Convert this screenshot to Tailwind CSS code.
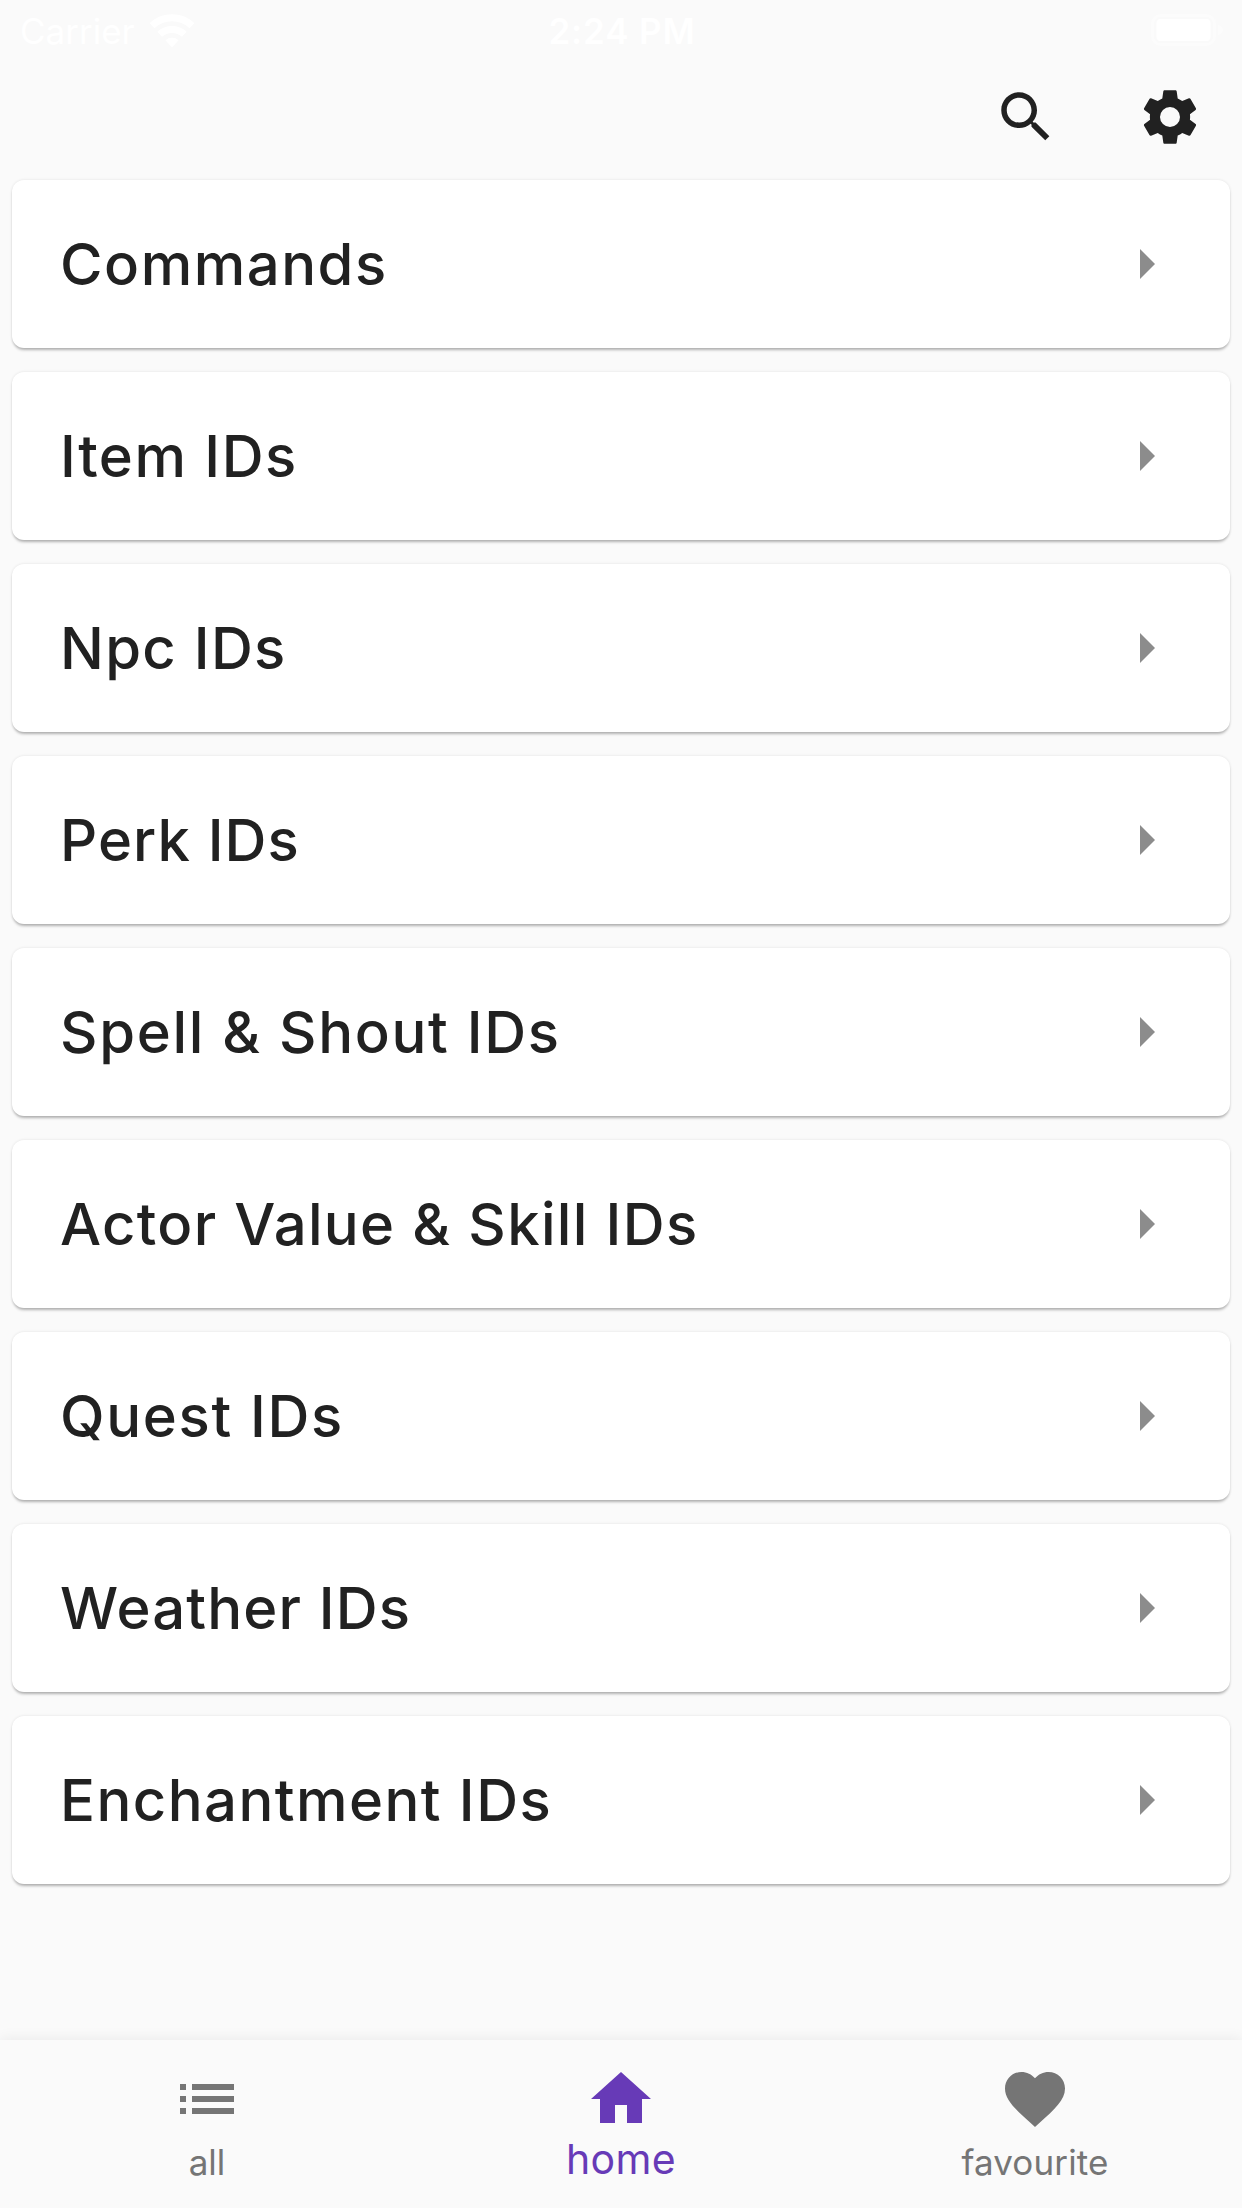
<!DOCTYPE html>
<html lang="en">
<head>
<meta charset="utf-8">
<meta name="viewport" content="width=device-width, initial-scale=1">
<title>Home</title>
<script src="https://cdn.jsdelivr.net/npm/@tailwindcss/browser@4"></script>
</head>
<body class="flex h-[2208px] w-[1242px] flex-col overflow-hidden bg-[#fafafa] font-['Inter',sans-serif] text-[#212121]">

  <!-- Status bar -->
  <div class="grid h-[62px] grid-cols-3 items-center pl-5 pr-[18px] text-[35px] leading-[62px] text-white">
    <div class="flex items-center">
      <span>Carrier</span>
      <svg class="ml-[15px] h-[34px] w-[44px]" viewBox="0 0 44 34" fill="none" stroke="currentColor" stroke-width="7">
        <path d="M2 11.6a29.3 29.3 0 0 1 40 0"/>
        <path d="M9.7 20.3a18 18 0 0 1 24.6 0"/>
        <path d="M22 33.5l-6.6-7.2a10 10 0 0 1 13.2 0z" fill="currentColor" stroke="none"/>
      </svg>
    </div>
    <span class="text-center font-semibold tracking-[0.84px]">2:24 PM</span>
    <svg class="-mt-0.5 h-8 w-[73px] justify-self-end" viewBox="0 0 73 32">
      <rect x="1.5" y="1.5" width="62" height="29" rx="8" fill="none" stroke="#fff" stroke-opacity=".4" stroke-width="3"/>
      <rect x="5.500" y="5" width="54" height="22" rx="4" fill="#fff"/>
      <path d="M67 10.500c3 1 5 3 5 5.500s-2 4.500-5 5.500z" fill="#fff" fill-opacity=".4"/>
    </svg>
  </div>

  <!-- Toolbar -->
  <header class="flex h-[110px] justify-end">
    <button class="flex w-36 items-center justify-center" aria-label="Search">
      <svg class="size-[66px]" viewBox="0 0 24 24" fill="currentColor"><path d="M15.500 14h-.79l-.28-.27C15.410 12.590 16 11.110 16 9.500 16 5.910 13.090 3 9.500 3S3 5.910 3 9.500 5.910 16 9.500 16c1.610 0 3.090-.59 4.230-1.570l.27.28v.79l5 4.990L20.490 19l-4.990-5zm-6 0C7.010 14 5 11.990 5 9.500S7.010 5 9.500 5 14 7.010 14 9.500 11.990 14 9.500 14z"/></svg>
    </button>
    <button class="flex w-36 items-center justify-center" aria-label="Settings">
      <svg class="size-[66px]" viewBox="-0.3 -0.3 24.6 24.6" fill="currentColor"><path d="M19.430 12.980c.04-.32.07-.64.07-.98s-.03-.66-.07-.98l2.110-1.650c.19-.15.24-.42.12-.64l-2-3.460c-.12-.22-.39-.3-.61-.22l-2.490 1c-.52-.4-1.080-.73-1.690-.98l-.38-2.650C14.460 2.180 14.250 2 14 2h-4c-.25 0-.46.18-.49.42l-.38 2.650c-.61.25-1.170.59-1.690.98l-2.490-1c-.23-.09-.49 0-.61.22l-2 3.460c-.13.22-.07.49.12.64l2.110 1.650c-.04.32-.07.65-.07.98s.03.66.07.98l-2.110 1.650c-.19.15-.24.42-.12.64l2 3.460c.12.22.39.3.61.22l2.490-1c.52.4 1.080.73 1.690.98l.38 2.650c.03.24.24.42.49.42h4c.25 0 .46-.18.49-.42l.38-2.650c.61-.25 1.170-.59 1.690-.98l2.490 1c.23.09.49 0 .61-.22l2-3.460c.12-.22.07-.49-.12-.64l-2.110-1.650zM12 15.730a3.730 3.730 0 1 1 0-7.460 3.730 3.730 0 0 1 0 7.460z"/></svg>
    </button>
  </header>

  <!-- Category list; each row reuses the arrow symbol -->
  <svg class="hidden"><symbol id="arrow" viewBox="0 0 24 24"><path d="M10 17l5-5-5-5v10z"/></symbol></svg>
  <main class="flex flex-1 flex-col gap-6 px-3 pt-2 text-[58px] font-medium leading-[72px] *:flex *:h-[168px] *:shrink-0 *:items-center *:justify-between *:rounded-xl *:bg-white *:pl-12 *:pr-12 *:shadow-[0_3px_3px_-1px_rgba(0,0,0,0.28),0_0_3px_rgba(0,0,0,0.1)]">
    <div><span class="tracking-[1.53px]">Commands</span><svg class="size-[72px] fill-[#8c8c8c]"><use href="#arrow"/></svg></div>
    <div><span class="tracking-[1.5px]">Item IDs</span><svg class="size-[72px] fill-[#8c8c8c]"><use href="#arrow"/></svg></div>
    <div><span class="tracking-[1.3px]">Npc IDs</span><svg class="size-[72px] fill-[#8c8c8c]"><use href="#arrow"/></svg></div>
    <div><span class="tracking-[1.1px]">Perk IDs</span><svg class="size-[72px] fill-[#8c8c8c]"><use href="#arrow"/></svg></div>
    <div><span class="tracking-[1.7px]">Spell &amp; Shout IDs</span><svg class="size-[72px] fill-[#8c8c8c]"><use href="#arrow"/></svg></div>
    <div><span class="tracking-[1.34px]">Actor Value &amp; Skill IDs</span><svg class="size-[72px] fill-[#8c8c8c]"><use href="#arrow"/></svg></div>
    <div><span class="tracking-[1.67px]">Quest IDs</span><svg class="size-[72px] fill-[#8c8c8c]"><use href="#arrow"/></svg></div>
    <div><span class="tracking-[1.15px]">Weather IDs</span><svg class="size-[72px] fill-[#8c8c8c]"><use href="#arrow"/></svg></div>
    <div><span class="tracking-[1.45px]">Enchantment IDs</span><svg class="size-[72px] fill-[#8c8c8c]"><use href="#arrow"/></svg></div>
  </main>

  <!-- Bottom navigation -->
  <nav class="grid h-[168px] grid-cols-3 bg-[#fafafa] pt-[23px] text-[35px] leading-[48px] text-[#757575] shadow-[0_0_14px_rgba(0,0,0,0.08)]">
    <a class="flex flex-col items-center">
      <svg class="size-[72px]" viewBox="0 0 24 24" fill="currentColor"><path d="M3 13h2v-2H3v2zm0 4h2v-2H3v2zm0-8h2V7H3v2zm4 4h14v-2H7v2zm0 4h14v-2H7v2zM7 7v2h14V7H7z"/></svg>
      <span class="mt-[3px]">all</span>
    </a>
    <a class="flex flex-col items-center text-[#673ab7]">
      <svg class="size-[72px]" viewBox="0 0 24 24" fill="currentColor"><path d="M10 20v-6h4v6h5v-8h3L12 3 2 12h3v8z"/></svg>
      <span class="text-[41px] tracking-[0.35px]">home</span>
    </a>
    <a class="flex flex-col items-center">
      <svg class="size-[72px]" viewBox="0 0 24 24" fill="currentColor"><path d="M12 21.350l-1.450-1.320C5.400 15.360 2 12.280 2 8.500 2 5.420 4.420 3 7.500 3c1.740 0 3.410.81 4.500 2.090C13.090 3.810 14.760 3 16.500 3 19.580 3 22 5.420 22 8.500c0 3.780-3.400 6.860-8.550 11.540L12 21.350z"/></svg>
      <span class="mt-[3px] tracking-[0.13px]">favourite</span>
    </a>
  </nav>
</body>
</html>
